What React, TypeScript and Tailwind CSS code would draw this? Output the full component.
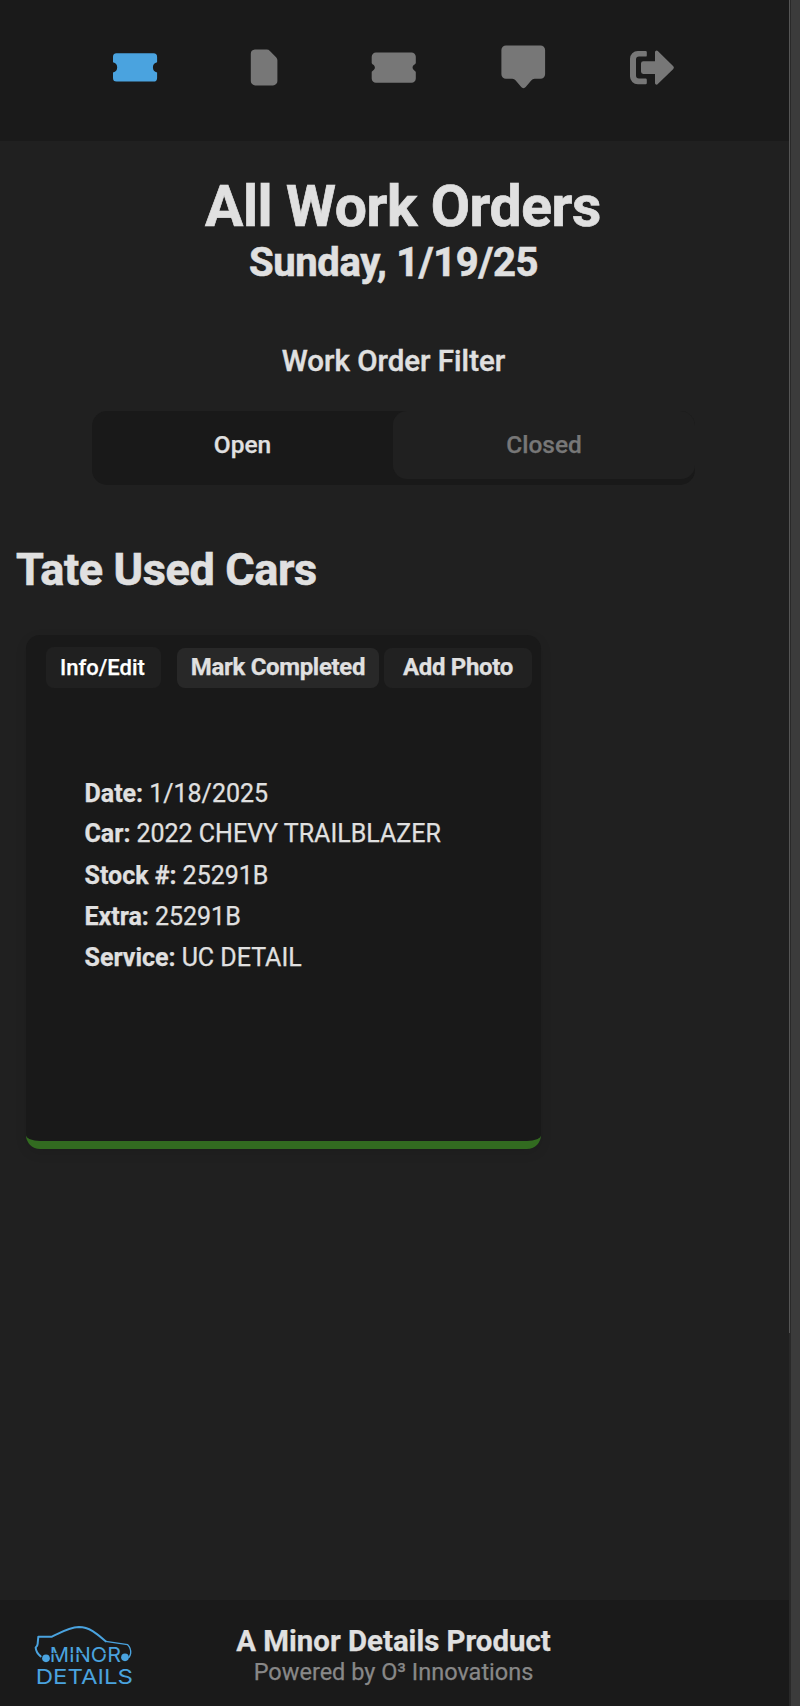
import type { ReactNode } from "react";

const NAV: { label: string; active?: boolean; shape: ReactNode }[] = [
  {
    label: "Work orders",
    active: true,
    shape: (
      <path d="M5.5 10.3h37a3.6 3.6 0 0 1 3.6 3.6v5.3a5.2 5.2 0 0 0 0 10.2v5.5a3.6 3.6 0 0 1-3.6 3.6h-37A3.6 3.6 0 0 1 2 34.900v-5.500a5.2 5.2 0 0 0 0-10.200v-5.300a3.600 3.600 0 0 1 3.500-3.600z" />
    ),
  },
  {
    label: "Documents",
    shape: (
      <path d="M14.900 6.600h11.800a4.500 4.500 0 0 1 3.200 1.300l6.200 6.300a4.500 4.500 0 0 1 1.300 3.200v20.600a4.400 4.400 0 0 1-4.400 4.400H15.200a4.400 4.400 0 0 1-4.400-4.400V11a4.400 4.400 0 0 1 4.100-4.400z" />
    ),
  },
  {
    label: "Tickets",
    shape: (
      <path
        transform="translate(-0.500 0)"
        d="M6.500 9.500h35.500a4.300 4.300 0 0 1 4.300 4.300v6.200c-.3 1.400-3.200 2-3.200 4.600s2.900 3.200 3.200 4.600v6.200a4.300 4.300 0 0 1-4.300 4.300H6.500a4.300 4.300 0 0 1-4.300-4.300v-6.200c.3-1.400 3.200-2 3.200-4.600s-2.900-3.200-3.200-4.600v-6.200a4.300 4.300 0 0 1 4.300-4.300z"
      />
    ),
  },
  {
    label: "Messages",
    shape: (
      <path d="M7 2.400h34.500a4.600 4.600 0 0 1 4.600 4.600v24.200a4.600 4.600 0 0 1-4.600 4.600H35.600a4.500 4.500 0 0 0-3.400 1.600l-5.500 6.700a2.900 2.900 0 0 1-4.500 0l-5.500-6.700a4.500 4.500 0 0 0-3.400-1.600H7a4.600 4.600 0 0 1-4.600-4.600V7A4.600 4.600 0 0 1 7 2.400z" />
    ),
  },
  {
    label: "Log out",
    shape: (
      <>
        <path d="M9.800 7.900h7.800a1.200 1.200 0 0 1 1.200 1.200v3.300a1.200 1.200 0 0 1-1.200 1.200h-6.600a3 3 0 0 0-3 3v16a3 3 0 0 0 3 3h6.600a1.200 1.200 0 0 1 1.200 1.200v3.300a1.200 1.200 0 0 1-1.200 1.200H9.800A7.800 7.800 0 0 1 2 33.500V15.700a7.800 7.800 0 0 1 7.800-7.800z" />
        <path d="M27 9.200a1.600 1.600 0 0 1 2.800-1.100l15.500 15.200a1.900 1.900 0 0 1 0 2.600L29.800 41.100A1.600 1.600 0 0 1 27 40V30.900H15.300a2.300 2.300 0 0 1-2.300-2.300V20.500a2.300 2.300 0 0 1 2.300-2.300H27z" />
      </>
    ),
  },
];

const DETAILS = [
  ["Date:", "1/18/2025"],
  ["Car:", "2022 CHEVY TRAILBLAZER"],
  ["Stock #:", "25291B"],
  ["Extra:", "25291B"],
  ["Service:", "UC DETAIL"],
];

function Logo() {
  return (
    <svg className="ml-5 h-[106px] w-[130px]" viewBox="0 30 390 318" fill="none">
      <g stroke="#4aa3df" strokeWidth="6" strokeLinecap="round" strokeLinejoin="round">
        <path d="M62 199C54 193 48 184 47 173C51 169 53 166 53 161L55 140H96C121 128 146 112 177 111C212 111 237 137 257 154" />
        <path d="M257 154L323 164C329 170 333 180 332 190C331 196 329 199 327 202" strokeWidth="4" />
      </g>
      <circle cx="78" cy="205" r="11.500" fill="#4aa3df" />
      <circle cx="315" cy="202" r="11.500" fill="#4aa3df" />
      <g fill="#4aa3df" fontFamily="Inter, sans-serif" fontWeight="400">
        <text x="89" y="215" fontSize="61" textLength="214" lengthAdjust="spacingAndGlyphs">MINOR</text>
        <text x="47" y="281" fontSize="62" textLength="292" lengthAdjust="spacingAndGlyphs">DETAILS</text>
      </g>
      <path d="M92 191H112M144 191H200M248 191H262" stroke="#1a1a1a" strokeWidth="3" />
    </svg>
  );
}

export default function App() {
  return (
    <div className="flex h-[1706px] w-[800px] overflow-hidden bg-[#202020] font-[Roboto,sans-serif] text-[#e0e0e0] [-webkit-text-stroke:0.25px_currentColor]">
      <div className="flex w-[789px] shrink-0 flex-col">
        <nav className="flex h-[141px] shrink-0 items-start justify-between bg-[#1a1a1a] pt-[43px] pr-[113px] pl-[111px]">
          {NAV.map((item) => (
            <button key={item.label} aria-label={item.label}>
              <svg
                viewBox="0 0 48 48"
                fill="currentColor"
                className={item.active ? "block size-12 text-[#4aa3df]" : "block size-12 text-[#777777]"}
              >
                {item.shape}
              </svg>
            </button>
          ))}
        </nav>

        <main className="flex h-[1459px] shrink-0 flex-col pt-8">
          <h1 className="h-[67px] pl-[17px] text-center text-[57px] leading-[68px] font-bold tracking-[-0.4px] [-webkit-text-stroke:0.7px_currentColor]">All Work Orders</h1>
          <h2 className="h-[46px] pr-0.5 text-center text-[40px] leading-[46px] font-bold tracking-[-0.36px] [-webkit-text-stroke:0.6px_currentColor]">Sunday, 1/19/25</h2>
          <h3 className="mt-[55px] h-10 pr-0.5 text-center text-[29.5px] leading-10 font-medium [-webkit-text-stroke:0.4px_currentColor]">Work Order Filter</h3>

          <div className="mt-[30px] ml-[92px] flex h-[74px] w-[603px] items-start overflow-hidden rounded-[15px] bg-[#191919] text-center text-[24.5px] leading-[68px] font-medium">
            <button className="h-[68px] w-[301px]">Open</button>
            <button className="h-[68px] w-[302px] rounded-[14px] bg-[#202020] text-[#777777]">Closed</button>
          </div>

          <h2 className="mt-[58px] h-[53px] pl-4 text-[45px] leading-[54px] font-bold tracking-[-0.38px] [-webkit-text-stroke:0.6px_currentColor]">Tate Used Cars</h2>

          <article className="mt-[39px] ml-[26px] h-[514px] w-[515px] rounded-[14px] border-b-8 border-[#326b20] bg-[#191919] shadow-[0_4px_12px_rgba(0,0,0,0.1)]">
            <div className="flex h-[53px] items-end pl-5 text-[24px] leading-[36px] tracking-[-0.33px]">
              <button className="h-[41px] w-[115px] rounded-[8px] bg-[#202020] pr-0.5 text-[22px] font-medium tracking-normal text-white">Info/Edit</button>
              <button className="ml-4 h-[40px] w-[202px] rounded-[8px] bg-[#282828] pb-0.5 font-bold">Mark Completed</button>
              <button className="ml-[5px] h-[40px] w-[148px] rounded-[8px] bg-[#212121] pb-0.5 font-bold">Add Photo</button>
            </div>
            <dl className="mt-[85px] pl-[58.5px] text-[25px] leading-[41px]">
              {DETAILS.map(([name, value]) => (
                <div key={name} className="flex h-[41px] gap-1.5 first:h-10 nth-2:h-[42px]">
                  <dt className="font-bold">{name}</dt>
                  <dd>{value}</dd>
                </div>
              ))}
            </dl>
          </article>
        </main>

        <footer className="grid h-[106px] shrink-0 grid-cols-[150px_1fr_150px] bg-[#1a1a1a]">
          <Logo />
          <div className="pt-[23px] pr-0.5 text-center">
            <p className="h-[36px] text-[29.4px] leading-[36px] font-bold">A Minor Details Product</p>
            <p className="text-[23.500px] leading-[27px] text-[#888888]">Powered by O³ Innovations</p>
          </div>
        </footer>
      </div>

      <div className="w-0.5 shrink-0 bg-[#292929]">
        <div className="h-[1333px] w-px bg-[#555555]" />
      </div>
      <div className="flex-1 bg-[#3b3b3b]" />
    </div>
  );
}
